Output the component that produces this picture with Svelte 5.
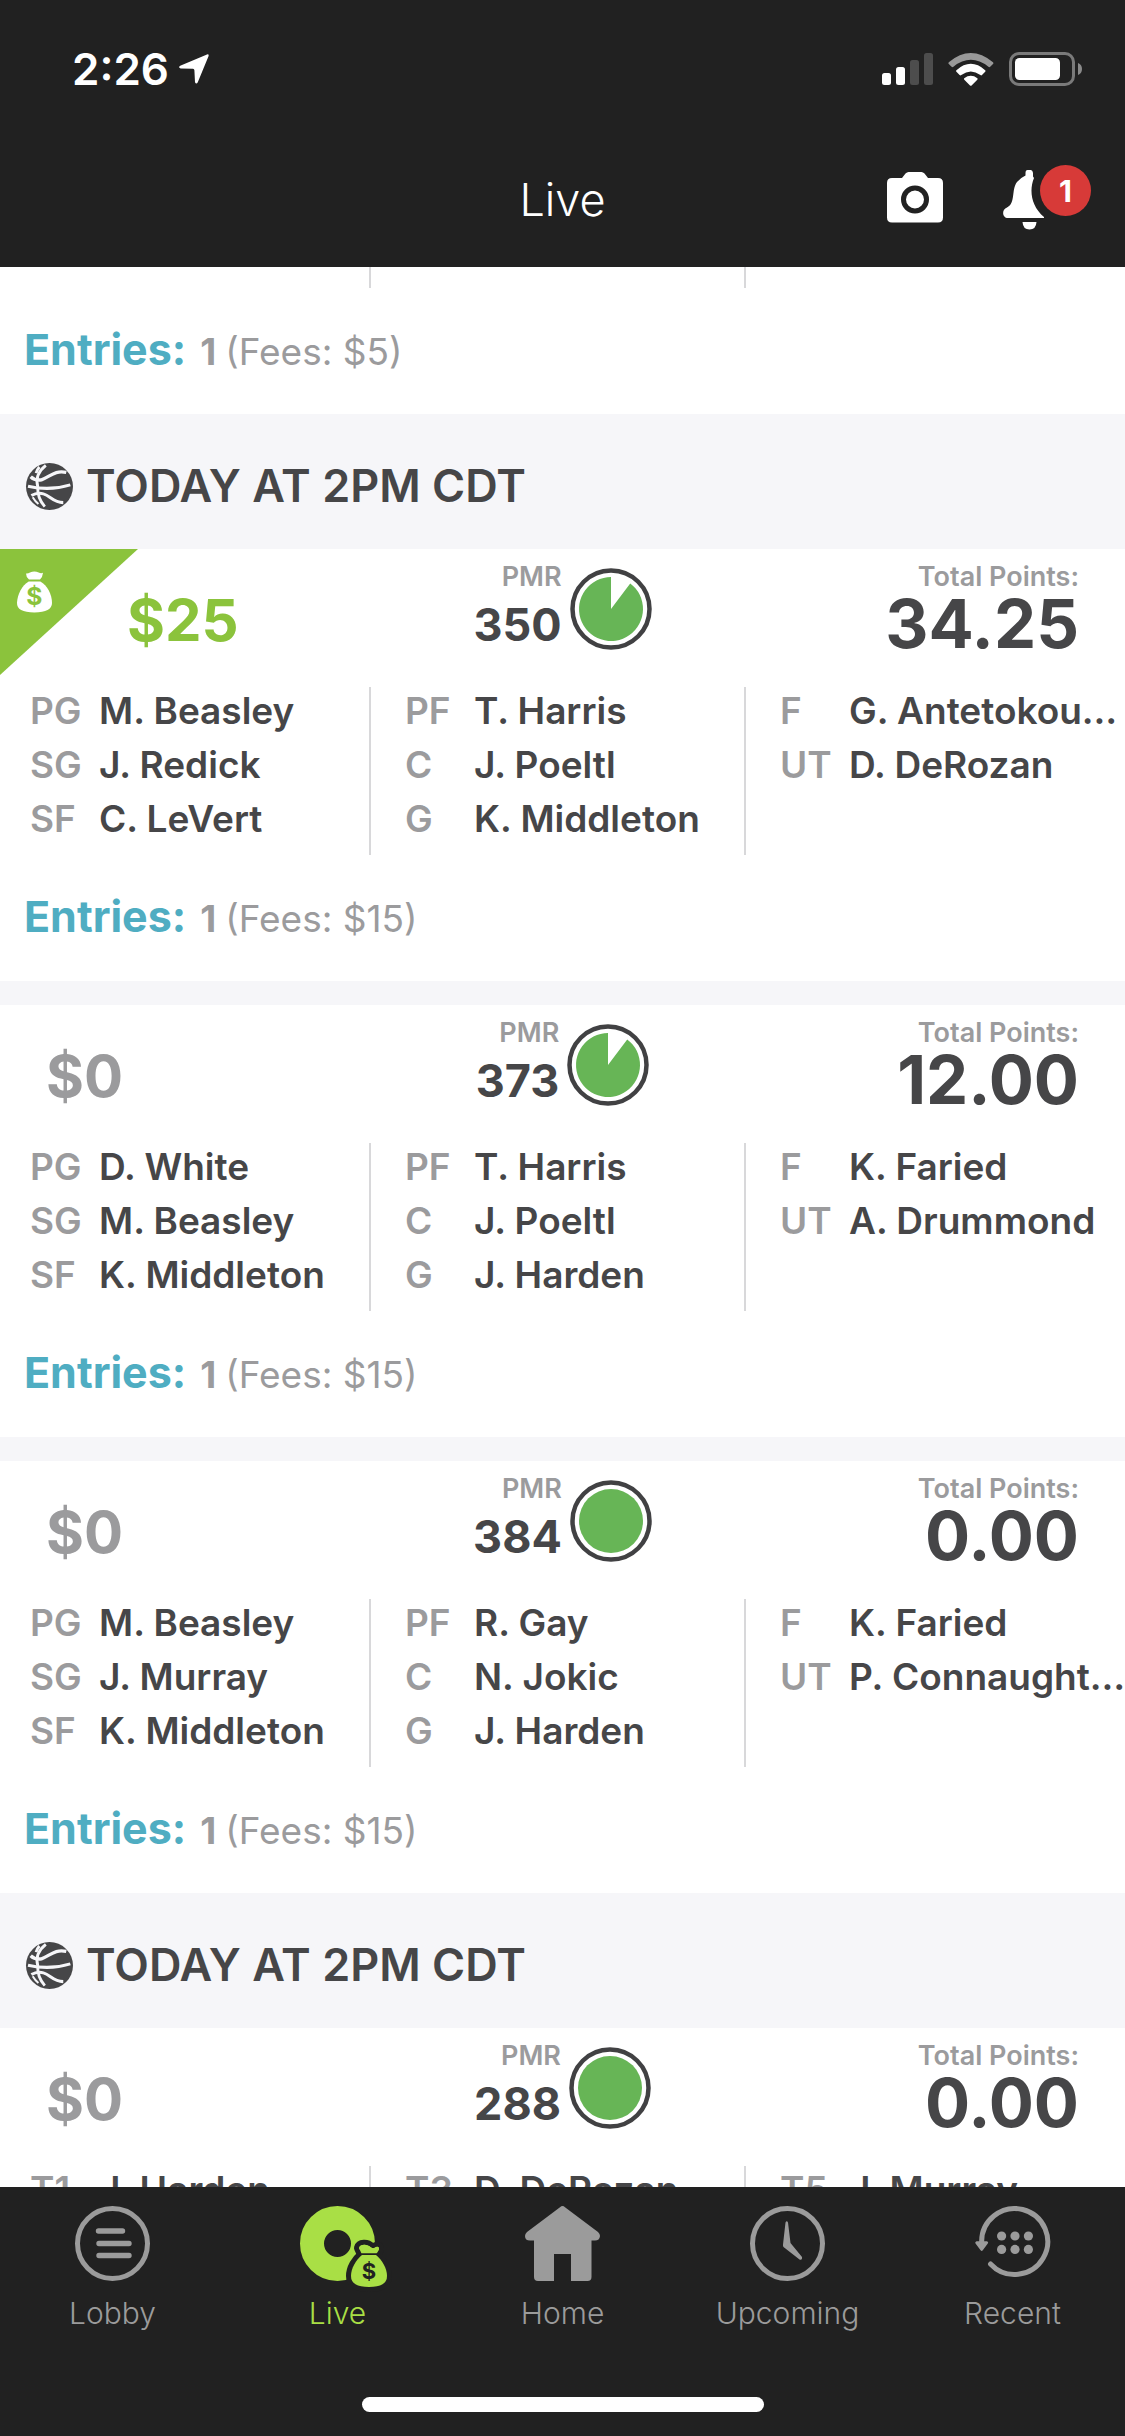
<script>
  const contests = [
    {
      heading: 'TODAY AT 2PM CDT',
      cards: [
        {
          winnings: '$25', winning: true, pmr: 350, full: false, points: '34.25', fees: '$15',
          columns: [
            [['PG', 'M. Beasley'], ['SG', 'J. Redick'], ['SF', 'C. LeVert']],
            [['PF', 'T. Harris'], ['C', 'J. Poeltl'], ['G', 'K. Middleton']],
            [['F', 'G. Antetokou…'], ['UT', 'D. DeRozan']]
          ]
        },
        {
          winnings: '$0', winning: false, pmr: 373, full: false, points: '12.00', fees: '$15',
          columns: [
            [['PG', 'D. White'], ['SG', 'M. Beasley'], ['SF', 'K. Middleton']],
            [['PF', 'T. Harris'], ['C', 'J. Poeltl'], ['G', 'J. Harden']],
            [['F', 'K. Faried'], ['UT', 'A. Drummond']]
          ]
        },
        {
          winnings: '$0', winning: false, pmr: 384, full: true, points: '0.00', fees: '$15',
          columns: [
            [['PG', 'M. Beasley'], ['SG', 'J. Murray'], ['SF', 'K. Middleton']],
            [['PF', 'R. Gay'], ['C', 'N. Jokic'], ['G', 'J. Harden']],
            [['F', 'K. Faried'], ['UT', 'P. Connaught…']]
          ]
        }
      ]
    },
    {
      heading: 'TODAY AT 2PM CDT',
      cards: [
        {
          winnings: '$0', winning: false, pmr: 288, full: true, points: '0.00', fees: null,
          columns: [[['T1', 'J. Harden']], [['T3', 'D. DeRozan']], [['T5', 'J. Murray']]]
        }
      ]
    }
  ];

  const tabs = ['Lobby', 'Live', 'Home', 'Upcoming', 'Recent'];
  let active = $state('Live');
</script>

{#snippet entries(fees)}
  <p class="entries">
    <a href="#entries">Entries:</a>
    <strong>1</strong>
    <span>(Fees: {fees})</span>
  </p>
{/snippet}

<div class="app">
  <header>
    <div class="status">
      <div class="clock">
        <span>2:26</span>
        <svg width="30" height="30" viewBox="0 0 30 30" aria-hidden="true">
          <path d="M28 0.400Q30.200-0.300 29.600 1.900L18.800 28.200Q17.300 31 16 28.200L15.400 16.200Q15.300 14.800 14 14.700L1.800 14.500Q-1.200 13.600 1.200 11.800Z" fill="#fff" />
        </svg>
      </div>
      <div class="signals">
        <svg width="51" height="32" viewBox="0 0 51 32" aria-hidden="true">
          <rect x="0" y="20" width="9" height="12" rx="2.5" fill="#fff" />
          <rect x="14" y="14" width="9" height="18" rx="2.5" fill="#fff" />
          <rect x="28" y="7" width="9" height="25" rx="2.5" fill="#4d4d4d" />
          <rect x="42" y="0" width="9" height="32" rx="2.5" fill="#4d4d4d" />
        </svg>
        <svg width="46" height="33" viewBox="0 0 46 33" aria-hidden="true">
          <path d="M0.8 9.2Q-0.2 10.2 0.8 11.1L3.6 13.8Q4.5 14.5 5.4 13.7Q22.8 0 40.4 13.7Q41.3 14.5 42.2 13.8L45 11.1Q46 10.2 45 9.2Q22.8-9.2 0.8 9.2Z" fill="#999" />
          <path d="M8.4 17.2Q7.6 18 8.4 18.8L11.6 22Q12.4 22.8 13.3 22Q22.8 14.8 32.4 22Q33.2 22.8 34 22L37.2 18.8Q38 18 37.2 17.2Q22.8 4.4 8.4 17.2Z" fill="#fff" />
          <path d="M16.2 25.2Q15.6 26 16.3 26.8L22 32.4Q22.8 33.2 23.6 32.4L29.3 26.8Q30 26 29.4 25.2Q22.8 20.4 16.2 25.2Z" fill="#fff" />
        </svg>
        <svg width="73" height="34" viewBox="0 0 73 34" aria-hidden="true">
          <rect x="1.5" y="1.5" width="63" height="31" rx="8.5" fill="none" stroke="#7a7a7a" stroke-width="3" />
          <rect x="6" y="6" width="45" height="22" rx="4.5" fill="#fff" />
          <path d="M69 11Q73 12.5 73 17T69 23Z" fill="#8a8a8a" />
        </svg>
      </div>
    </div>
    <div class="nav">
      <h1>Live</h1>
      <div class="actions">
        <button aria-label="Camera">
          <svg class="camera" width="56" height="51" viewBox="0 0 56 51" aria-hidden="true">
            <path d="M5 6H15L18.5 1.5Q20 0 21.5 0H34.5Q36 0 37.5 1.5L41 6H51Q56 6 56 11V45.5Q56 50.500 51 50.500H5Q0 50.500 0 45.500V11Q0 6 5 6Z" fill="#fff" />
            <circle cx="28" cy="27.500" r="11.500" fill="#fff" stroke="#212121" stroke-width="5" />
          </svg>
        </button>
        <button class="bell" aria-label="Notifications">
          <svg width="42" height="60" viewBox="0 0 42 60" aria-hidden="true">
            <path d="M24.500 0H27.500Q29.500 0 30 3V6.500L31 8C26 20 28 36 41 47V48H5C-0.500 48-2 40 4 37.500C13 33 8 20 14 12Q18 7.500 22.500 5.500V3Q22.500 0 24.500 0Z" fill="#fff" />
            <path d="M19.500 52H33.500Q33 59.500 26.500 59.500T19.500 52Z" fill="#fff" />
          </svg>
          <span class="badge">1</span>
        </button>
      </div>
    </div>
  </header>

  <main>
    <article>
      <div class="columns tail"><div></div><div></div><div></div></div>
      {@render entries('$5')}
    </article>
    {#each contests as contest}
      <section>
        <h2>
          <svg width="47" height="47" viewBox="79 96 140 140" aria-hidden="true">
            <circle cx="149" cy="166" r="70" fill="#464648" />
            <g fill="none" stroke="#f6f6f9" stroke-width="8.500">
              <path d="M138 103Q104 130 114 166Q112 200 135 226" />
              <path d="M119 108Q112 116 109 126" />
              <path d="M93 137Q105 149 125 146C150 138 164 116 199 124" stroke-width="10" />
              <path d="M85 165Q150 180 211 161" stroke-width="9" />
              <path d="M95 193Q113 182 131 188C152 194 160 214 190 214" stroke-width="9" />
              <path d="M99 198Q106 210 116 218" stroke-width="6" />
            </g>
          </svg>
          {contest.heading}
        </h2>
        {#each contest.cards as card}
          <article>
            {#if card.winning}
              <div class="ribbon">
                <svg width="35" height="42" viewBox="51 422 105 125" aria-hidden="true">
                  <path d="M78 429Q84 430 90 426Q103 420 116 426Q123 430 129 427Q128 440 120 447H87Q78 440 78 429Z" fill="#fff" />
                  <path d="M86 453H121C142 465 156 492 156 517Q156 546 103 546T51 517C52 492 66 465 86 453Z" fill="#fff" />
                  <text x="103" y="522" text-anchor="middle">$</text>
                </svg>
              </div>
            {/if}
            <div class="summary">
              <p class="winnings" class:won={card.winning}>{card.winnings}</p>
              <div class="pmr">
                <div class="stack">
                  <span class="label">PMR</span>
                  <span class="minutes">{card.pmr}</span>
                </div>
                <svg width="82" height="82" viewBox="0 0 82 82" aria-hidden="true">
                  <circle cx="41" cy="41" r="38.500" fill="#fff" stroke="#414143" stroke-width="4.500" />
                  {#if card.full}
                    <circle cx="41" cy="41" r="32" fill="#67b556" />
                  {:else}
                    <path d="M41 41V9A32 32 0 1 0 60.200 15.400Z" fill="#67b556" />
                  {/if}
                </svg>
              </div>
              <div class="stack total">
                <span class="label">Total Points:</span>
                <span class="points">{card.points}</span>
              </div>
            </div>
            <div class="columns">
              {#each card.columns as column}
                <ul>
                  {#each column as [slot, name]}
                    <li><span class="slot">{slot}</span><span class="name">{name}</span></li>
                  {/each}
                </ul>
              {/each}
            </div>
            {#if card.fees}
              {@render entries(card.fees)}
            {/if}
          </article>
        {/each}
      </section>
    {/each}
  </main>

  <footer>
    <nav>
      {#each tabs as tab}
        <button class:active={active === tab} onclick={() => (active = tab)}>
          <svg width="75" height="75" viewBox="0 0 75 75" aria-hidden="true">
            {#if tab === 'Lobby'}
              <g fill="none" stroke="currentColor" stroke-width="5" stroke-linecap="round">
                <circle cx="37.500" cy="37.500" r="35" />
                <path d="M23.500 25H47.500M24 37.500H54M24 49.500H54" stroke-width="5.400" />
              </g>
            {:else if tab === 'Live'}
              <circle cx="37.500" cy="37.500" r="25.500" fill="none" stroke="currentColor" stroke-width="24" />
              <g fill="currentColor" stroke="#212121" stroke-width="10" stroke-linejoin="round" paint-order="stroke">
                <path d="M59 42C60 38 67 37.500 71 41.500Q74 43 76 41Q79 40 79 43Q78 46 76.500 47.500H61.500Q60 44 59 42Z" />
                <path d="M62 49H76C82 54 87 62 87 70Q87 81 69 81T51 70C51 62 56 54 62 49Z" />
              </g>
              <path d="M59 42C60 38 67 37.500 71 41.500Q74 43 76 41Q79 40 79 43Q78 46 76.500 47.500H61.500Q60 44 59 42Z" fill="currentColor" />
              <path d="M61 48.200H77" stroke="#212121" stroke-width="1.400" />
              <text x="69" y="72.500" text-anchor="middle">$</text>
            {:else if tab === 'Home'}
              <path d="M35 1.200Q37.500-1 40 1.200L73 26Q75 28 75 30Q74.500 34.500 70 34.500H66.500V71Q66.500 75 62.500 75H46V48H29V75H13Q9 75 9 71V34.500H5Q0 34.500 0 30Q0 28 2 26Z" fill="currentColor" />
            {:else if tab === 'Upcoming'}
              <circle cx="37.500" cy="37.500" r="35" fill="none" stroke="currentColor" stroke-width="5" />
              <path d="M35.500 16.500Q36.800 14 38 16.500L40.500 37L52 51Q52.500 54.500 49.500 53.500L33.500 41Q32.800 40 33 38.500Z" fill="currentColor" />
            {:else}
              <path d="M6.700 37A33 33 0 1 1 15.500 58" fill="none" stroke="currentColor" stroke-width="5" stroke-linecap="round" />
              <path d="M1.500 35.200H12Q14 36 12.800 37.500L7.800 44.300Q6.700 45.500 5.600 44.300L0.500 37.500Q-0.500 36 1.500 35.200Z" fill="currentColor" />
              {#each [26.6, 40, 53.4] as x}
                <circle cx={x} cy="30" r="4.600" fill="currentColor" />
                <circle cx={x} cy="43.400" r="4.600" fill="currentColor" />
              {/each}
            {/if}
          </svg>
          <span>{tab}</span>
        </button>
      {/each}
    </nav>
    <div class="indicator"></div>
  </footer>
</div>

<style>
  :global(body) {
    margin: 0;
  }
  .app {
    height: 100vh;
    display: flex;
    flex-direction: column;
    font-family: Inter, 'Liberation Sans', sans-serif;
    color: #464648;
    background: #f6f6f9;
  }
  svg {
    display: block;
    flex: none;
    overflow: visible;
  }
  h1, h2, p, ul {
    margin: 0;
    padding: 0;
  }
  button {
    border: 0;
    padding: 0;
    background: none;
    font: inherit;
    color: inherit;
  }

  header {
    flex: none;
    background: #212121;
    color: #fff;
  }
  .status {
    display: flex;
    justify-content: space-between;
    align-items: center;
    padding: 42px 43px 37px 72px;
  }
  .clock {
    display: flex;
    align-items: center;
    gap: 10px;
    font-size: 44px;
    line-height: 54px;
    font-weight: 600;
  }
  .signals {
    display: flex;
    align-items: center;
    gap: 15px;
  }
  .nav {
    display: grid;
    grid-template-columns: 1fr auto 1fr;
    align-items: center;
    height: 134px;
  }
  h1 {
    grid-column: 2;
    font-size: 45px;
    line-height: 54px;
    font-weight: 300;
  }
  .actions {
    display: flex;
    justify-content: flex-end;
    align-items: center;
    gap: 60px;
    padding-right: 80px;
  }
  .camera {
    margin-bottom: 6px;
  }
  .bell {
    position: relative;
  }
  .badge {
    position: absolute;
    left: 37px;
    top: -5px;
    width: 51px;
    height: 51px;
    border-radius: 50%;
    background: #d73a38;
    font-size: 30px;
    line-height: 52px;
    font-weight: 700;
    text-align: center;
  }

  main {
    flex: 1;
    min-height: 0;
    overflow: hidden;
  }
  h2 {
    display: flex;
    align-items: center;
    gap: 13px;
    padding: 46px 26px 37px;
    font-size: 45px;
    line-height: 52px;
    font-weight: 600;
  }
  article {
    position: relative;
    background: #fff;
  }
  article + article {
    margin-top: 24px;
  }
  .ribbon {
    position: absolute;
    left: 0;
    top: 0;
    width: 138px;
    height: 126px;
    box-sizing: border-box;
    padding: 22px 17px;
    background: #8bc33c;
    clip-path: polygon(0 0, 100% 0, 0 100%);
  }
  .ribbon text {
    font-size: 74px;
    font-weight: 700;
    fill: #8bc33c;
  }
  .summary {
    display: grid;
    grid-template-columns: repeat(3, 1fr);
    height: 138px;
    box-sizing: border-box;
    padding-top: 10px;
  }
  .winnings {
    padding: 31px 0 0 46px;
    font-size: 58px;
    line-height: 60px;
    font-weight: 700;
    color: #9b9b9d;
  }
  .won {
    padding-left: 127px;
    color: #8bc33c;
  }
  .pmr {
    display: flex;
    justify-content: center;
    gap: 8px;
  }
  .pmr svg {
    margin-top: 9px;
  }
  .stack {
    display: flex;
    flex-direction: column;
    align-items: flex-end;
  }
  .total {
    padding-right: 46px;
  }
  .label {
    font-size: 27px;
    line-height: 36px;
    font-weight: 600;
    color: #9b9b9d;
  }
  .minutes {
    font-size: 45px;
    line-height: 60px;
    font-weight: 700;
  }
  .points {
    font-size: 67px;
    line-height: 58px;
    font-weight: 700;
  }
  .columns {
    display: grid;
    grid-template-columns: repeat(3, 1fr);
    height: 168px;
  }
  .columns.tail {
    height: 21px;
  }
  .columns > * {
    min-width: 0;
    margin-right: 4px;
    border-right: 2px solid #d8d8da;
  }
  .columns > :last-child {
    border-right: 0;
  }
  ul {
    display: flex;
    flex-direction: column;
    gap: 6px;
    list-style: none;
  }
  li {
    display: flex;
    padding-left: 30px;
    font-size: 37px;
    line-height: 48px;
    font-weight: 600;
    white-space: nowrap;
  }
  .slot {
    flex: none;
    width: 69px;
    color: #9b9b9d;
  }
  .entries {
    display: flex;
    align-items: baseline;
    height: 126px;
    box-sizing: border-box;
    padding: 35px 24px 0;
    font-size: 37px;
    line-height: 52px;
    color: #9b9b9d;
  }
  .entries a {
    margin-right: 14px;
    font-size: 43px;
    font-weight: 700;
    color: #4fadc2;
    text-decoration: none;
  }
  .entries strong {
    margin-right: 9px;
    font-weight: 700;
  }

  footer {
    flex: none;
    padding: 19px 0 24px;
    background: #212121;
  }
  nav {
    display: grid;
    grid-template-columns: repeat(5, 1fr);
  }
  nav button {
    display: flex;
    flex-direction: column;
    align-items: center;
    gap: 14px;
    font-size: 30px;
    line-height: 36px;
    font-weight: 300;
    color: #9b9b9b;
  }
  nav .active {
    color: #a9df45;
  }
  nav text {
    font-size: 22px;
    font-weight: 700;
    fill: #212121;
  }
  .indicator {
    width: 402px;
    height: 15px;
    margin: 66px auto 0;
    border-radius: 8px;
    background: #fff;
  }
</style>
